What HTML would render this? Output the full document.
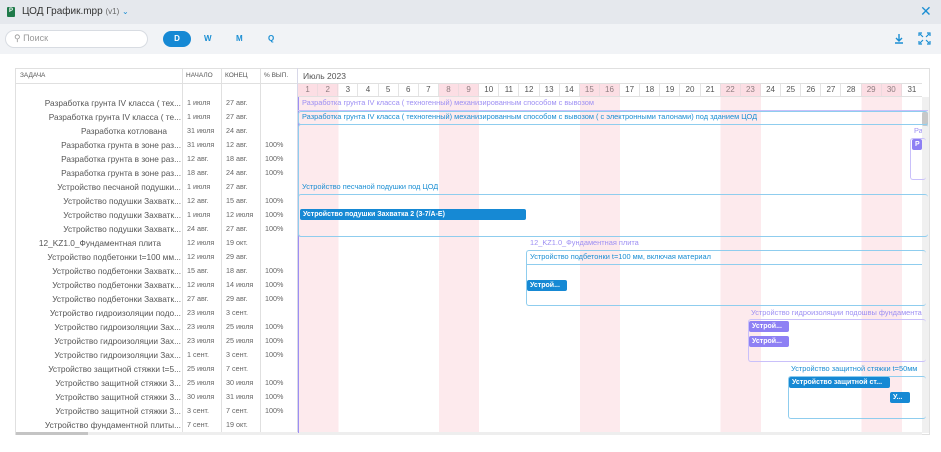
<!DOCTYPE html>
<html><head><meta charset="utf-8"><style>
*{margin:0;padding:0;box-sizing:border-box}
body{width:941px;height:452px;overflow:hidden;background:#fff;font-family:"Liberation Sans","Noto Sans CJK SC",sans-serif;color:#444;position:relative}
.a{position:absolute}
.title{left:0;top:0;width:941px;height:24px;background:#e5e8ed}
.tb{left:0;top:24px;width:941px;height:30px;background:#f1f3f6}
.t{white-space:nowrap;overflow:hidden}
.row{position:absolute;left:15px;width:283px;height:14px;font-size:8.3px;line-height:14px;color:#555}
.row .n{position:absolute;right:117px;text-align:right;white-space:nowrap;overflow:hidden}
.row .s{position:absolute;left:172px;font-size:7.2px;color:#666}
.row .e{position:absolute;left:211px;font-size:7.2px;color:#666}
.row .p{position:absolute;left:250px;font-size:7.2px;color:#666}
.lbl{position:absolute;font-size:7.4px;white-space:nowrap;overflow:hidden;line-height:10px}
.pu{color:#9d8ff3}.bl{color:#1a8ed3}
.bar{position:absolute;height:11px;border-radius:2px;color:#fff;font-weight:bold;font-size:7px;line-height:11px;padding-left:3px;white-space:nowrap;overflow:hidden}
.bb{background:#1689d4}.bp{background:#8e80f4}
.box{position:absolute;border:1px solid;border-radius:3px}
</style></head><body>
<div class="a title"></div>
<div class="a" style="left:7px;top:7px;width:8px;height:10px;background:#1f7a4a;border-radius:1px"></div>
<div class="a" style="left:9px;top:8px;font-size:6px;color:#fff;font-weight:bold">P</div>
<div class="a t" style="left:22px;top:6px;font-size:10px;color:#333">ЦОД График.mpp <span style="font-size:8px;color:#666">(v1)</span> <span style="color:#1a8ed3;font-size:8px">&#8964;</span></div>
<div class="a" style="left:920px;top:3px;font-size:14px;color:#1a8ed3">&#10005;</div>
<div class="a tb"></div>
<div class="a" style="left:5px;top:30px;width:143px;height:18px;border:1px solid #d8dce2;border-radius:9px;background:#fff"></div>
<div class="a" style="left:14px;top:33px;font-size:9px;color:#999">&#9906; Поиск</div>
<div class="a" style="left:163px;top:31px;width:28px;height:16px;border-radius:8px;background:#1689d4;color:#fff;font-size:8px;font-weight:bold;text-align:center;line-height:16px">D</div>
<div class="a" style="left:204px;top:34px;font-size:8px;font-weight:bold;color:#1a8ed3">W</div>
<div class="a" style="left:236px;top:34px;font-size:8px;font-weight:bold;color:#1a8ed3">M</div>
<div class="a" style="left:268px;top:34px;font-size:8px;font-weight:bold;color:#1a8ed3">Q</div>
<svg class="a" style="left:893px;top:33px" width="12" height="12"><path d="M6 1v7M3 5l3 3 3-3M2 10h8" stroke="#1a8ed3" stroke-width="1.4" fill="none"/></svg>
<svg class="a" style="left:918px;top:32px" width="13" height="13"><path d="M1 4V1h3M9 1h3v3M12 9v3H9M4 12H1V9M2 2l3 3M11 2L8 5M11 11L8 8M2 11l3-3" stroke="#1a8ed3" stroke-width="1.2" fill="none"/></svg>

<div class="a" style="left:15px;top:68px;width:915px;height:367px;border:1px solid #e0e0e0"></div>
<div class="a" style="left:15px;top:83px;width:283px;height:1px;background:#e0e0e0"></div>
<div class="a" style="left:182px;top:68px;width:1px;height:366px;background:#e0e0e0"></div>
<div class="a" style="left:221px;top:68px;width:1px;height:366px;background:#e0e0e0"></div>
<div class="a" style="left:260px;top:68px;width:1px;height:366px;background:#e0e0e0"></div>
<div class="a" style="left:297px;top:68px;width:1px;height:366px;background:#d8d8e8"></div>
<div class="a" style="left:20px;top:72px;font-size:6.5px;color:#555">ЗАДАЧА</div>
<div class="a" style="left:186px;top:72px;font-size:6.5px;color:#555">НАЧАЛО</div>
<div class="a" style="left:225px;top:72px;font-size:6.5px;color:#555">КОНЕЦ</div>
<div class="a" style="left:264px;top:72px;font-size:6.5px;color:#555">% ВЫП.</div>
<div class="a" style="left:303px;top:71px;font-size:8.5px;color:#555">Июль 2023</div>
<div class="a" style="left:298px;top:83px;width:624px;height:350px;background:repeating-linear-gradient(90deg,#fdeaed 0,#fdeaed 40.26px,transparent 40.26px,transparent 140.9px)"></div>
<div class="a" style="left:298px;top:83px;width:624px;height:14px;border-top:1px solid #e0e0e0;border-bottom:1px solid #e0e0e0;display:grid;grid-template-columns:repeat(31,1fr);font-size:8px;color:#555;text-align:center;line-height:12px">
<div style="border-right:1px solid #e4e4e4">1</div><div style="border-right:1px solid #e4e4e4">2</div><div style="border-right:1px solid #e4e4e4">3</div><div style="border-right:1px solid #e4e4e4">4</div><div style="border-right:1px solid #e4e4e4">5</div><div style="border-right:1px solid #e4e4e4">6</div><div style="border-right:1px solid #e4e4e4">7</div><div style="border-right:1px solid #e4e4e4">8</div><div style="border-right:1px solid #e4e4e4">9</div><div style="border-right:1px solid #e4e4e4">10</div><div style="border-right:1px solid #e4e4e4">11</div><div style="border-right:1px solid #e4e4e4">12</div><div style="border-right:1px solid #e4e4e4">13</div><div style="border-right:1px solid #e4e4e4">14</div><div style="border-right:1px solid #e4e4e4">15</div><div style="border-right:1px solid #e4e4e4">16</div><div style="border-right:1px solid #e4e4e4">17</div><div style="border-right:1px solid #e4e4e4">18</div><div style="border-right:1px solid #e4e4e4">19</div><div style="border-right:1px solid #e4e4e4">20</div><div style="border-right:1px solid #e4e4e4">21</div><div style="border-right:1px solid #e4e4e4">22</div><div style="border-right:1px solid #e4e4e4">23</div><div style="border-right:1px solid #e4e4e4">24</div><div style="border-right:1px solid #e4e4e4">25</div><div style="border-right:1px solid #e4e4e4">26</div><div style="border-right:1px solid #e4e4e4">27</div><div style="border-right:1px solid #e4e4e4">28</div><div style="border-right:1px solid #e4e4e4">29</div><div style="border-right:1px solid #e4e4e4">30</div><div>31</div></div>
<div class="a" style="left:298px;top:84px;width:624px;height:12px;background:repeating-linear-gradient(90deg,rgba(250,200,210,.35) 0,rgba(250,200,210,.35) 40.26px,transparent 40.26px,transparent 140.9px)"></div>
<div class="a" style="left:922px;top:97px;width:7px;height:336px;background:#f0f0f0"></div>
<div class="a" style="left:922px;top:112px;width:6px;height:14px;background:#c8c8c8;border-radius:2px"></div>
<div class="a" style="left:16px;top:432px;width:906px;height:3px;background:#eee"></div>
<div class="a" style="left:16px;top:432px;width:72px;height:3px;background:#c4c4c4"></div>

<div class="row" style="top:96px"><span class="n">Разработка грунта IV класса ( тех...</span><span class="s">1 июля</span><span class="e">27 авг.</span></div>
<div class="row" style="top:110px"><span class="n">Разработка грунта IV класса ( те...</span><span class="s">1 июля</span><span class="e">27 авг.</span></div>
<div class="row" style="top:124px"><span class="n" style="right:131px">Разработка котлована</span><span class="s">31 июля</span><span class="e">24 авг.</span></div>
<div class="row" style="top:138px"><span class="n">Разработка грунта в зоне раз...</span><span class="s">31 июля</span><span class="e">12 авг.</span><span class="p">100%</span></div>
<div class="row" style="top:152px"><span class="n">Разработка грунта в зоне раз...</span><span class="s">12 авг.</span><span class="e">18 авг.</span><span class="p">100%</span></div>
<div class="row" style="top:166px"><span class="n">Разработка грунта в зоне раз...</span><span class="s">18 авг.</span><span class="e">24 авг.</span><span class="p">100%</span></div>
<div class="row" style="top:180px"><span class="n">Устройство песчаной подушки...</span><span class="s">1 июля</span><span class="e">27 авг.</span></div>
<div class="row" style="top:194px"><span class="n">Устройство подушки Захватк...</span><span class="s">12 авг.</span><span class="e">15 авг.</span><span class="p">100%</span></div>
<div class="row" style="top:208px"><span class="n">Устройство подушки Захватк...</span><span class="s">1 июля</span><span class="e">12 июля</span><span class="p">100%</span></div>
<div class="row" style="top:222px"><span class="n">Устройство подушки Захватк...</span><span class="s">24 авг.</span><span class="e">27 авг.</span><span class="p">100%</span></div>
<div class="row" style="top:236px"><span class="n" style="right:137px">12_KZ1.0_Фундаментная плита</span><span class="s">12 июля</span><span class="e">19 окт.</span></div>
<div class="row" style="top:250px"><span class="n">Устройство подбетонки t=100 мм...</span><span class="s">12 июля</span><span class="e">29 авг.</span></div>
<div class="row" style="top:264px"><span class="n">Устройство подбетонки Захватк...</span><span class="s">15 авг.</span><span class="e">18 авг.</span><span class="p">100%</span></div>
<div class="row" style="top:278px"><span class="n">Устройство подбетонки Захватк...</span><span class="s">12 июля</span><span class="e">14 июля</span><span class="p">100%</span></div>
<div class="row" style="top:292px"><span class="n">Устройство подбетонки Захватк...</span><span class="s">27 авг.</span><span class="e">29 авг.</span><span class="p">100%</span></div>
<div class="row" style="top:306px"><span class="n">Устройство гидроизоляции подо...</span><span class="s">23 июля</span><span class="e">3 сент.</span></div>
<div class="row" style="top:320px"><span class="n">Устройство гидроизоляции Зах...</span><span class="s">23 июля</span><span class="e">25 июля</span><span class="p">100%</span></div>
<div class="row" style="top:334px"><span class="n">Устройство гидроизоляции Зах...</span><span class="s">23 июля</span><span class="e">25 июля</span><span class="p">100%</span></div>
<div class="row" style="top:348px"><span class="n">Устройство гидроизоляции Зах...</span><span class="s">1 сент.</span><span class="e">3 сент.</span><span class="p">100%</span></div>
<div class="row" style="top:362px"><span class="n">Устройство защитной стяжки t=5...</span><span class="s">25 июля</span><span class="e">7 сент.</span></div>
<div class="row" style="top:376px"><span class="n">Устройство защитной стяжки 3...</span><span class="s">25 июля</span><span class="e">30 июля</span><span class="p">100%</span></div>
<div class="row" style="top:390px"><span class="n">Устройство защитной стяжки 3...</span><span class="s">30 июля</span><span class="e">31 июля</span><span class="p">100%</span></div>
<div class="row" style="top:404px"><span class="n">Устройство защитной стяжки 3...</span><span class="s">3 сент.</span><span class="e">7 сент.</span><span class="p">100%</span></div>
<div class="row" style="top:418px"><span class="n">Устройство фундаментной плиты...</span><span class="s">7 сент.</span><span class="e">19 окт.</span></div>

<div class="a" style="left:298px;top:97px;width:1px;height:336px;background:#9d8ff3"></div>
<div class="box" style="left:298px;top:97px;width:630px;height:14px;border-color:#c9c0fa;border-top:none;border-left:none;border-right:none;border-radius:0"></div>
<div class="lbl pu" style="left:302px;top:98px">Разработка грунта IV класса ( техногенный) механизированным способом с вывозом</div>
<div class="box" style="left:298px;top:111px;width:630px;height:14px;border-color:#8fcdee;border-right:none"></div>
<div class="lbl bl" style="left:302px;top:112px">Разработка грунта IV класса ( техногенный) механизированным способом с вывозом ( с электронными талонами) под зданием ЦОД</div>
<div class="box" style="left:298px;top:124px;width:630px;height:113px;border-color:#8fcdee;border-right:none"></div>
<div class="lbl pu" style="left:914px;top:126px;width:8px">Ра</div>
<div class="box" style="left:910px;top:138px;width:16px;height:42px;border-color:#c9c0fa;border-right:none"></div>
<div class="bar bp" style="left:912px;top:139px;width:10px">Р</div>
<div class="lbl bl" style="left:302px;top:182px">Устройство песчаной подушки под ЦОД</div>
<div class="box" style="left:298px;top:194px;width:630px;height:43px;border-color:#8fcdee;border-right:none"></div>
<div class="bar bb" style="left:300px;top:209px;width:226px">Устройство подушки Захватка 2 (3-7/А-Е)</div>
<div class="lbl pu" style="left:530px;top:238px">12_KZ1.0_Фундаментная плита</div>
<div class="box" style="left:526px;top:250px;width:400px;height:56px;border-color:#8fcdee;border-right:none"></div>
<div class="a" style="left:527px;top:264px;width:395px;height:1px;background:#8fcdee"></div>
<div class="lbl bl" style="left:530px;top:252px">Устройство подбетонки t=100 мм, включая материал</div>
<div class="bar bb" style="left:527px;top:280px;width:40px">Устрой...</div>
<div class="lbl pu" style="left:751px;top:308px;width:171px">Устройство гидроизоляции подошвы фундамента</div>
<div class="box" style="left:748px;top:319px;width:178px;height:43px;border-color:#c9c0fa;border-right:none"></div>
<div class="bar bp" style="left:749px;top:321px;width:40px">Устрой...</div>
<div class="bar bp" style="left:749px;top:336px;width:40px">Устрой...</div>
<div class="lbl bl" style="left:791px;top:364px;width:131px">Устройство защитной стяжки t=50мм</div>
<div class="box" style="left:788px;top:376px;width:138px;height:43px;border-color:#8fcdee;border-right:none"></div>
<div class="bar bb" style="left:789px;top:377px;width:101px">Устройство защитной ст...</div>
<div class="bar bb" style="left:890px;top:392px;width:20px">У...</div>
</body></html>
